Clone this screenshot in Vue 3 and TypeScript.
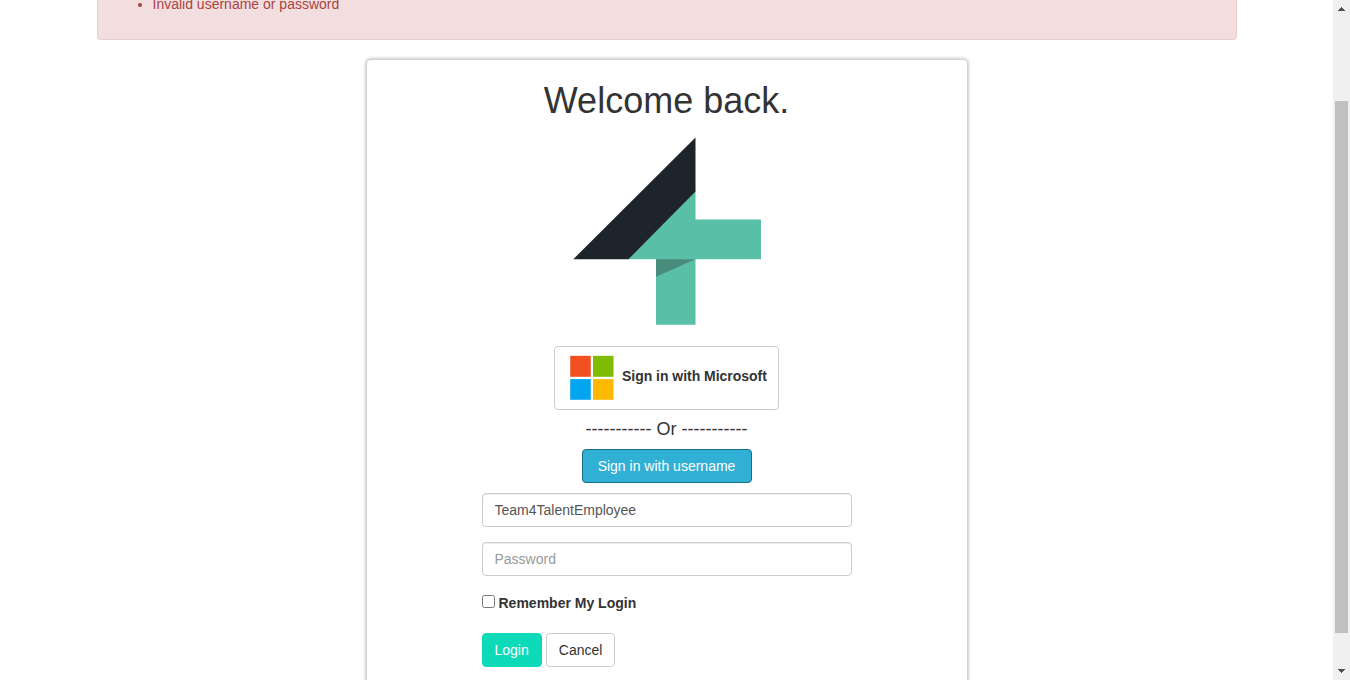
<script setup lang="ts">
import { ref } from 'vue'

const errors = ref<string[]>(['Invalid username or password'])
const username = ref('Team4TalentEmployee')
const password = ref('')
const remember = ref(false)
</script>

<template>
  <div class="window">
    <main class="page">
      <div class="alert">
        <ul>
          <li v-for="e in errors" :key="e">{{ e }}</li>
        </ul>
      </div>
      <section class="card">
        <h1>Welcome back.</h1>
        <svg class="logo" width="200" height="200" viewBox="567 131 200 200">
          <path fill="#5abfa7" d="M695.5 191V219.5H761V259.2H695.5V324.7H656V259.2H628Z" />
          <path fill="#4a8c7c" d="M656 259.2H695.5L656 276.7Z" />
          <path fill="#1d242b" d="M695.5 137.5V191.5L628.5 259.2H573.3Z" />
        </svg>
        <button class="btn microsoft" type="button">
          <svg width="44" height="45" viewBox="0 0 44 45">
            <path fill="#f35022" d="M0.2 0.8H20.8V21.8H0.2Z" />
            <path fill="#80bb03" d="M23 0.8H43.5V21.8H23Z" />
            <path fill="#03a5f0" d="M0.2 24.1H20.8V44.8H0.2Z" />
            <path fill="#ffb903" d="M23 24.1H43.5V44.8H23Z" />
          </svg>
          <span>Sign in with Microsoft</span>
        </button>
        <h4>----------- Or -----------</h4>
        <button class="btn info" type="button">Sign in with username</button>
        <form class="login" @submit.prevent>
          <input v-model="username" class="control" type="text" placeholder="Username" />
          <input v-model="password" class="control" type="password" placeholder="Password" />
          <label class="remember">
            <input v-model="remember" type="checkbox" />
            <strong>Remember My Login</strong>
          </label>
          <div class="actions">
            <button class="btn primary" type="submit">Login</button>
            <button class="btn" type="button">Cancel</button>
          </div>
        </form>
      </section>
    </main>
    <div class="scrollbar">
      <svg width="7" height="4" viewBox="0 0 7 4" shape-rendering="crispEdges"><path fill="#505050" d="M3 0h1v1h1v1h1v1h1v1H0V3h1V2h1V1h1z" /></svg>
      <div class="thumb"></div>
      <svg width="7" height="4" viewBox="0 0 7 4" shape-rendering="crispEdges"><path fill="#505050" d="M0 0h7v1H6v1H5v1H4v1H3V3H2V2H1V1H0z" /></svg>
    </div>
  </div>
</template>

<style>
body {
  margin: 0;
  overflow: hidden;
}
</style>

<style scoped>
* {
  box-sizing: border-box;
}
.window {
  display: flex;
  width: 1350px;
  height: 680px;
  overflow: hidden;
  background: #fff;
  color: #333;
  font: 14px/20px "Liberation Sans", Arial, sans-serif;
}
.page {
  width: 1333px;
  display: flex;
  flex-direction: column;
  align-items: center;
}
.alert {
  flex: none;
  width: 1140px;
  height: 40px;
  border: 1px solid #ebccd1;
  border-top: 0;
  border-radius: 0 0 4px 4px;
  background: #f2dede;
  color: #a94442;
  padding: 0 15px;
}
.alert ul {
  margin: -6px 0 10px;
  padding-left: 40px;
}
.card {
  flex: none;
  width: 600px;
  height: 680px;
  margin-top: 20px;
  padding-top: 21px;
  border-radius: 4px;
  background: #fff;
  box-shadow: 0 0 3px 2px #ccc;
  display: flex;
  flex-direction: column;
  align-items: center;
}
h1 {
  margin: 0 0 10px;
  font-size: 36px;
  line-height: 40px;
}
h1,
h4 {
  font-weight: 400;
}
.logo {
  display: block;
  flex: none;
}
.btn {
  height: 34px;
  padding: 6px 12px;
  border: 1px solid #ccc;
  border-radius: 4px;
  background: #fff;
  color: #333;
  font: inherit;
  white-space: nowrap;
}
.microsoft {
  width: 225px;
  height: 64px;
  margin-top: 15px;
  padding: 0 0 2px 15px;
  display: flex;
  align-items: center;
  gap: 8px;
  font-weight: 700;
}
.microsoft span {
  padding-bottom: 3px;
  letter-spacing: -0.03px;
}
h4 {
  margin: 9px 0 10px;
  font-size: 18px;
  line-height: 20px;
}
.info {
  width: 170px;
  background: #31b0d5;
  border-color: #1b6d85;
  color: #fff;
}
.login {
  width: 370px;
  margin-top: 10px;
  display: flex;
  flex-direction: column;
}
.control {
  height: 34px;
  margin: 0 0 15px;
  padding: 6px 12px;
  border: 1px solid #ccc;
  border-radius: 4px;
  background: #fff;
  color: #555;
  font: inherit;
  box-shadow: inset 0 1px 1px rgba(0, 0, 0, 0.075);
}
.control::placeholder {
  color: #999;
  opacity: 1;
}
.remember {
  display: flex;
  gap: 4px;
  height: 20px;
  margin: 2px 0 20px;
}
.remember input {
  width: 13px;
  height: 13px;
  margin: 2px 0 0;
}
.actions {
  display: flex;
  gap: 4px;
}
.primary {
  background: #0cdab9;
  border-color: #0cdab9;
  color: #fff;
}
.scrollbar {
  width: 17px;
  background: #f0f0f0;
  display: flex;
  flex-direction: column;
  align-items: center;
  justify-content: space-between;
  padding: 7px 0 7px;
}
.scrollbar svg {
  margin-left: -1px;
}
.thumb {
  width: 13px;
  height: 532px;
  margin: 90px 2px 36px;
  align-self: flex-start;
  background: #c1c1c1;
}
</style>
